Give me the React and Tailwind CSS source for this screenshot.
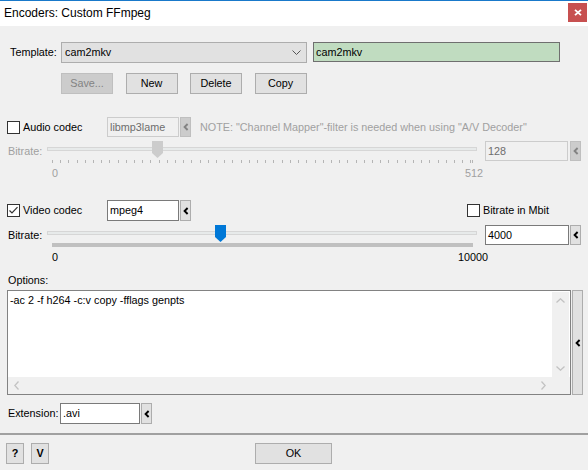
import React from "react";

const ArrowBtn = ({ disabled, h = "h-[20px]" }) => (
  <div
    className={
      "w-[11px] flex items-center justify-center border " +
      h +
      (disabled ? " bg-[#cccccc] border-[#bfbfbf]" : " bg-[#e1e1e1] border-[#adadad]")
    }
  >
    <svg width="6" height="8" viewBox="0 0 6 8">
      <path d="M4.6 1 L1.6 4 L4.6 7" fill="none" stroke={disabled ? "#838383" : "#000"} strokeWidth="1.9" />
    </svg>
  </div>
);

const Check = ({ checked }) => (
  <div className="w-[13px] h-[13px] border border-[#333333] bg-white flex items-center justify-center shrink-0">
    {checked && (
      <svg width="11" height="11" viewBox="0 0 11 11">
        <path d="M1.5 5.5 L4 8 L9.5 2.2" fill="none" stroke="#333" strokeWidth="1.2" />
      </svg>
    )}
  </div>
);

const Btn = ({ children, disabled, w = "w-[52px]", bold }) => (
  <div
    className={
      "h-[21px] flex items-center justify-center border " +
      w +
      (disabled ? " bg-[#cccccc] border-[#bfbfbf] text-[#838383]" : " bg-[#e1e1e1] border-[#adadad] text-black") +
      (bold ? " font-bold" : "")
    }
  >
    {children}
  </div>
);

const Thumb = ({ color }) => (
  <svg width="11" height="17" viewBox="0 0 11 17">
    <path d="M0 0 H11 V12 L5.5 17 L0 12 Z" fill={color} />
  </svg>
);

function Slider({ disabled, thumbLeft, max, maxLeft }) {
  const ticks = [];
  if (disabled) {
    for (let v = 0; v <= 510; v += 10) ticks.push(v);
    ticks.push(512);
  }
  return (
    <div className="relative w-[430px] h-[38px]">
      <div className="absolute left-0 right-0 top-[6px] h-[4px] border border-[#d6d6d6] bg-[#e7eaea]" />
      <div className="absolute top-0" style={{ left: thumbLeft }}>
        <Thumb color={disabled ? "#cccccc" : "#0078d7"} />
      </div>
      {disabled ? (
        ticks.map((v) => (
          <div
            key={v}
            className="absolute top-[19px] w-px h-[3px] bg-[#b5b5b5]"
            style={{ left: 5 + Math.round((v / 512) * 420) }}
          />
        ))
      ) : (
        <div className="absolute top-[18px] left-[5px] w-[421px] h-[4px] bg-[#c0c0c0]" />
      )}
      <div className={"absolute top-[25px] left-[5px] leading-[14px] " + (disabled ? "text-[#a0a0a0]" : "text-black")}>0</div>
      <div
        className={"absolute top-[25px] leading-[14px] " + (disabled ? "text-[#a0a0a0]" : "text-black")}
        style={{ left: maxLeft }}
      >
        {max}
      </div>
    </div>
  );
}

export default function App() {
  return (
    <div className="w-[588px] h-[470px] bg-[#f0f0f0] overflow-hidden text-[10.8px] text-black font-['Liberation_Sans',Arial,sans-serif] flex flex-col">
      {/* Title bar */}
      <div className="h-[26px] bg-white border-t border-[#1979ca] flex items-start justify-between shrink-0">
        <div className="pl-[4px] pt-[5px] text-[12px] leading-[15px]">Encoders: Custom FFmpeg</div>
        <div className="w-[19px] h-[19px] mt-[2px] mr-[1px] bg-[#c75050] flex items-center justify-center">
          <svg width="8" height="7" viewBox="0 0 8 7">
            <path d="M1 0.8 L7 6.2 M7 0.8 L1 6.2" stroke="#fff" strokeWidth="1.8" />
          </svg>
        </div>
      </div>

      {/* Template row */}
      <div className="mt-[16px] flex items-start h-[21px]">
        <div className="pl-[10px] w-[61px] leading-[21px]">Template:</div>
        <div className="w-[246px] h-[21px] bg-[#e1e1e1] border border-[#adadad] flex items-center justify-between pl-[3px] pr-[5px]">
          <span>cam2mkv</span>
          <svg width="9" height="5" viewBox="0 0 9 5">
            <path d="M0.5 0.5 L4.5 4.5 L8.5 0.5" fill="none" stroke="#555" strokeWidth="1" />
          </svg>
        </div>
        <div className="ml-[6px] w-[247px] h-[20px] bg-[#c0dcc0] border border-[#6f6f6f] flex items-center pl-[2px]">
          cam2mkv
        </div>
      </div>

      {/* Buttons */}
      <div className="mt-[10px] ml-[61px] flex gap-[12.5px]">
        <Btn disabled>Save...</Btn>
        <Btn>New</Btn>
        <Btn>Delete</Btn>
        <Btn>Copy</Btn>
      </div>

      {/* Audio codec */}
      <div className="mt-[23px] h-[20px] flex items-center">
        <div className="ml-[7px]">
          <Check />
        </div>
        <div className="ml-[3px] w-[84px]">Audio codec</div>
        <div className="w-[72px] h-[20px] border border-[#cccccc] bg-[#f0f0f0] text-[#6d6d6d] flex items-center pl-[2px]">
          libmp3lame
        </div>
        <div className="ml-[1px]">
          <ArrowBtn disabled />
        </div>
        <div className="ml-[9px] text-[#a0a0a0]">NOTE: "Channel Mapper"-filter is needed when using "A/V Decoder"</div>
      </div>

      {/* Audio bitrate */}
      <div className="mt-[4px] flex items-start">
        <div className="w-[47px] pl-[8px] leading-[20px] text-[#a0a0a0]">Bitrate:</div>
        <Slider disabled thumbLeft={105} max="512" maxLeft={418} />
        <div className="ml-[8px] w-[83px] h-[20px] border border-[#cccccc] bg-[#f0f0f0] text-[#6d6d6d] flex items-center pl-[2px]">
          128
        </div>
        <div className="ml-[2px]">
          <ArrowBtn disabled />
        </div>
      </div>

      {/* Video codec */}
      <div className="mt-[21px] h-[21px] flex items-center">
        <div className="ml-[7px]">
          <Check checked />
        </div>
        <div className="ml-[3px] w-[84px]">Video codec</div>
        <div className="w-[72px] h-[21px] border border-[#7a7a7a] bg-white flex items-center pl-[2px]">mpeg4</div>
        <div className="ml-[1px]">
          <ArrowBtn h="h-[21px]" />
        </div>
        <div className="ml-[276px]">
          <Check />
        </div>
        <div className="ml-[3px]">Bitrate in Mbit</div>
      </div>

      {/* Video bitrate */}
      <div className="mt-[4px] flex items-start">
        <div className="w-[47px] pl-[8px] leading-[20px]">Bitrate:</div>
        <Slider thumbLeft={168} max="10000" maxLeft={411} />
        <div className="ml-[8px] w-[84px] h-[20px] border border-[#7a7a7a] bg-white flex items-center pl-[2px]">
          4000
        </div>
        <div className="ml-[1px]">
          <ArrowBtn />
        </div>
      </div>

      {/* Options */}
      <div className="mt-[10px] pl-[8px] leading-[14px]">Options:</div>
      <div className="mt-[3px] flex items-start">
        <div className="ml-[7px] w-[564px] h-[105px] border border-[#828282] bg-white flex flex-col">
          <div className="flex-1 flex">
            <div className="flex-1 pl-[2px] pt-[2px] leading-[14px]">-ac 2 -f h264 -c:v copy -fflags genpts</div>
            <div className="w-[17px] mr-[1px] mt-[1px] bg-[#f0f0f0] flex flex-col items-center justify-between py-[6px]">
              <svg width="9" height="5" viewBox="0 0 9 5">
                <path d="M0.5 4.5 L4.5 0.8 L8.5 4.5" fill="none" stroke="#c2c2c2" strokeWidth="1.3" />
              </svg>
              <svg width="9" height="5" viewBox="0 0 9 5">
                <path d="M0.5 0.5 L4.5 4.2 L8.5 0.5" fill="none" stroke="#c2c2c2" strokeWidth="1.3" />
              </svg>
            </div>
          </div>
          <div className="h-[17px] flex">
            <div className="flex-1 bg-[#f0f0f0] flex items-center justify-between px-[6px]">
              <svg width="5" height="9" viewBox="0 0 5 9">
                <path d="M4.5 0.5 L0.8 4.5 L4.5 8.5" fill="none" stroke="#c2c2c2" strokeWidth="1.3" />
              </svg>
              <svg width="5" height="9" viewBox="0 0 5 9">
                <path d="M0.5 0.5 L4.2 4.5 L0.5 8.5" fill="none" stroke="#c2c2c2" strokeWidth="1.3" />
              </svg>
            </div>
            <div className="w-[18px] bg-[#f0f0f0]" />
          </div>
        </div>
        <div className="ml-[1px]">
          <ArrowBtn h="h-[105px]" />
        </div>
      </div>

      {/* Extension */}
      <div className="mt-[8px] h-[21px] flex items-center">
        <div className="pl-[8px] w-[60px]">Extension:</div>
        <div className="w-[80px] h-[21px] border border-[#7a7a7a] bg-white flex items-center pl-[2px]">.avi</div>
        <div className="ml-[1px]">
          <ArrowBtn h="h-[21px]" />
        </div>
      </div>

      {/* Separator */}
      <div className="mt-[9px] h-[2px] bg-[#a0a0a0]" />

      {/* Footer */}
      <div className="mt-[8px] flex items-start">
        <div className="ml-[6px]">
          <Btn w="w-[18px]" bold>?</Btn>
        </div>
        <div className="ml-[7px]">
          <Btn w="w-[18px]" bold>V</Btn>
        </div>
        <div className="ml-[206px]">
          <Btn w="w-[77px]">OK</Btn>
        </div>
      </div>
    </div>
  );
}
